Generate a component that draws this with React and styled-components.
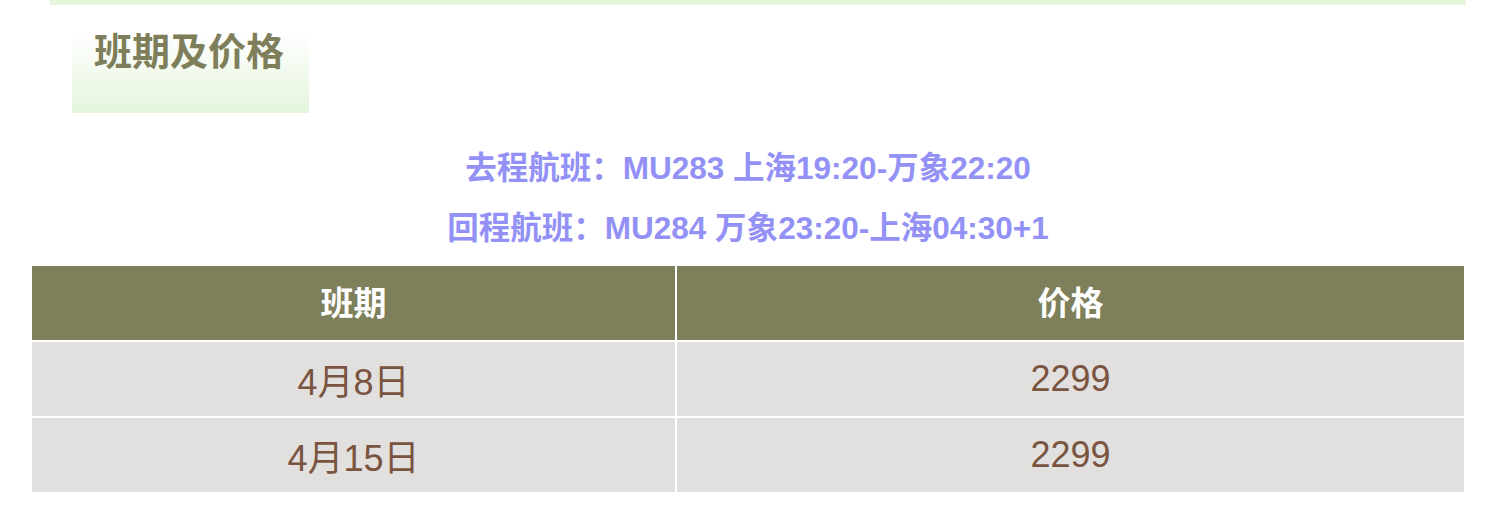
import React from "react";
import styled, { createGlobalStyle } from "styled-components";

const Global = createGlobalStyle`
  html, body { margin: 0; padding: 0; background: #ffffff; }
  body { font-family: "Liberation Sans", "Noto Sans CJK SC", sans-serif; }
`;

const Page = styled.div`
  width: 1495px;
  display: flex;
  flex-direction: column;
`;

const TopBar = styled.div`
  margin-left: 50px;
  width: 1416px;
  height: 5px;
  background: #e4f5dc;
`;

const Section = styled.section`
  padding: 28px 31px 0 32px;
  display: flex;
  flex-direction: column;
`;

const TitleBox = styled.div`
  margin-left: 40px;
  width: 237px;
  height: 80px;
  box-sizing: border-box;
  padding-left: 22px;
  background: linear-gradient(to bottom, #ffffff 0%, #e4f5dc 100%);
`;

const Title = styled.h2`
  margin: -3px 0 0 0;
  font-family: "Noto Sans CJK SC", sans-serif;
  font-weight: 700;
  font-size: 38px;
  line-height: 38px;
  color: #7e7f5a;
`;

const Flights = styled.div`
  margin-top: 25px;
  display: flex;
  flex-direction: column;
  align-items: center;
`;

const FlightLine = styled.p`
  margin: 0;
  line-height: 60px;
  font-family: "Liberation Sans", "Noto Sans CJK SC", sans-serif;
  font-weight: 700;
  font-size: 31.5px;
  color: #9391f6;
  white-space: nowrap;
`;

const Grid = styled.div`
  margin-top: 8px;
  display: grid;
  grid-template-columns: 643px 1fr;
  grid-auto-rows: 74px;
  gap: 2px;
  background: #ffffff;
`;

const Cell = styled.div`
  display: flex;
  align-items: center;
  justify-content: center;
  box-sizing: border-box;
  padding-bottom: ${(p) => (p.$head ? "4px" : "0")};
  background: ${(p) => (p.$head ? "#7e7f5b" : "#e1e0de")};
  color: ${(p) => (p.$head ? "#ffffff" : "#7a5440")};
  font-family: ${(p) =>
    p.$head
      ? `"Noto Sans CJK SC", sans-serif`
      : `"Liberation Sans", "Noto Sans CJK SC", sans-serif`};
  font-weight: ${(p) => (p.$head ? 700 : 400)};
  font-size: ${(p) => (p.$head ? "33px" : "36px")};
`;

const rows = [
  ["4月8日", "2299"],
  ["4月15日", "2299"],
];

export default function App() {
  return (
    <Page>
      <Global />
      <TopBar />
      <Section>
        <TitleBox>
          <Title>班期及价格</Title>
        </TitleBox>
        <Flights>
          <FlightLine>去程航班：MU283 上海19:20-万象22:20</FlightLine>
          <FlightLine>回程航班：MU284 万象23:20-上海04:30+1</FlightLine>
        </Flights>
        <Grid>
          <Cell $head>班期</Cell>
          <Cell $head>价格</Cell>
          {rows.map(([d, p]) => (
            <React.Fragment key={d}>
              <Cell>{d}</Cell>
              <Cell>{p}</Cell>
            </React.Fragment>
          ))}
        </Grid>
      </Section>
    </Page>
  );
}
